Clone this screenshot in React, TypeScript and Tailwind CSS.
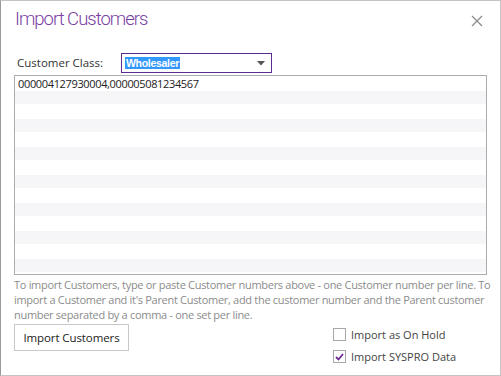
import React from "react";

export default function App() {
  const font = { fontFamily: '"Open Sans", "Noto Sans", sans-serif' };
  return (
    <div
      className="w-[501px] h-[376px] bg-white border border-[#c4c4c4] border-l-[#9a9a9a] flex flex-col box-border"
      style={font}
    >
      <div className="flex justify-between items-start pl-[14px] pr-[12px] h-[44px]">
        <div
          className="text-[18.5px] leading-[28px] mt-[4px] text-[#7a3ea3] font-light tracking-[-1px]"
          style={{ fontFamily: 'Roboto, "Open Sans", sans-serif' }}
        >
          Import Customers
        </div>
        <svg width="12" height="12" viewBox="0 0 12 12" className="mt-[14px] mr-[5px]">
          <path d="M1 1 L11 11 M11 1 L1 11" stroke="#8a8a8a" strokeWidth="1.2" fill="none" />
        </svg>
      </div>
      <div className="flex items-center pl-[16px] h-[20px] mt-[8px]">
        <div className="w-[104px] text-[11.5px] text-[#333] leading-none">Customer Class:</div>
        <div className="w-[151px] h-[20px] border border-[#5c2d91] flex items-center justify-between pl-[3px] pr-[6px]">
          <span
            className="bg-[#3399ff] text-white font-bold leading-[12px] px-[1px]"
            style={{ fontFamily: '"Liberation Sans", Arial, sans-serif', fontSize: "10.5px", letterSpacing: "-0.3px" }}
          >
            Wholesaler
          </span>
          <svg width="8" height="5" viewBox="0 0 8 5">
            <path d="M0 0 L8 0 L4 4.5 Z" fill="#555" />
          </svg>
        </div>
      </div>
      <div className="mx-[13px] mt-[2px] h-[200px] border border-[#acacac] bg-[repeating-linear-gradient(to_bottom,#ffffff_0px,#ffffff_15px,#f6f5f8_15px,#f6f5f8_28px)] pl-[3px]">
        <div className="text-[11px] leading-[15px] text-[#222] tracking-[-0.35px]">
          000004127930004,000005081234567
        </div>
      </div>
      <div className="px-[13px] mt-[2px] text-[11px] leading-[15px] text-[#8c8c8c] tracking-[-0.3px] whitespace-nowrap">
        <div>To import Customers, type or paste Customer numbers above - one Customer number per line. To</div>
        <div>import a Customer and it's Parent Customer, add the customer number and the Parent customer</div>
        <div>number separated by a comma - one set per line.</div>
      </div>
      <div className="flex justify-between px-[13px] mt-[2px]">
        <div className="w-[115px] h-[27px] border border-[#c8c8c8] flex items-center justify-center text-[11.5px] text-[#222] tracking-[-0.1px]">
          Import Customers
        </div>
        <div className="flex flex-col gap-[9px] w-[154px] mt-[4px]">
          <div className="flex items-center gap-[5px] h-[13px]">
            <div className="w-[13px] h-[13px] border border-[#a8a8a8] bg-white" />
            <span className="text-[11px] text-[#444] leading-[13px]">Import as On Hold</span>
          </div>
          <div className="flex items-center gap-[5px] h-[13px]">
            <div className="w-[13px] h-[13px] border border-[#a8a8a8] bg-white flex items-center justify-center">
              <svg width="9" height="8" viewBox="0 0 9 8">
                <path d="M1 4 L3.5 6.5 L8 1" stroke="#6a2c91" strokeWidth="1.8" fill="none" />
              </svg>
            </div>
            <span className="text-[11px] text-[#444] leading-[13px]">Import SYSPRO Data</span>
          </div>
        </div>
      </div>
    </div>
  );
}
